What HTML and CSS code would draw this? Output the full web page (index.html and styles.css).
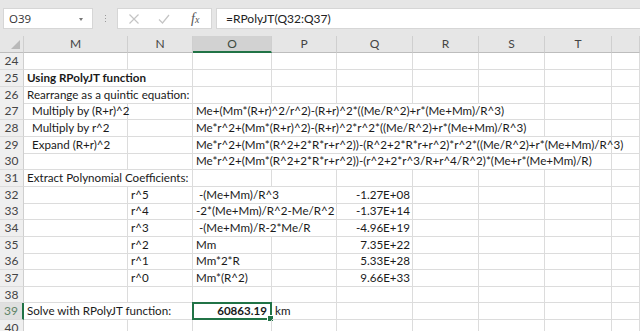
FILE: index.html
```html
<!DOCTYPE html>
<html lang="en">
<head>
    <meta charset="UTF-8">
    <meta name="viewport" content="width=device-width, initial-scale=1.0">
    <title>RPolyJT</title>
    <link rel="stylesheet" href="styles.css">
</head>
<body>

    <!-- Formula bar -->
    <div class="formula-bar">
        <div class="name-box">
            <span>O39</span>
            <span class="caret"></span>
        </div>
        <div class="grip">
            <span></span><span></span><span></span>
        </div>
        <div class="fx-buttons">
            <svg class="btn-icon" width="12" height="12" viewBox="0 0 12 12">
                <path d="M1.5 1.5 L10.5 10.5 M10.5 1.5 L1.5 10.5" stroke="#c4c4c4" stroke-width="1.2" fill="none"/>
            </svg>
            <svg class="btn-icon" width="12" height="12" viewBox="0 0 12 12">
                <path d="M1 6.5 L4.5 10 L11 2" stroke="#c4c4c4" stroke-width="1.2" fill="none"/>
            </svg>
            <span class="fx">f<i>x</i></span>
        </div>
        <div class="formula-input">=RPolyJT(Q32:Q37)</div>
    </div>

    <!-- Sheet -->
    <div class="sheet">
        <div class="row head">
            <div class="corner"><span class="corner-tri"></span></div>
            <div class="ch">M</div>
            <div class="ch">N</div>
            <div class="ch active">O</div>
            <div class="ch">P</div>
            <div class="ch">Q</div>
            <div class="ch">R</div>
            <div class="ch">S</div>
            <div class="ch">T</div>
            <div class="ch"></div>
        </div>

        <div class="row r17">
            <div class="rh">24</div>
            <div class="c"></div><div class="c"></div><div class="c"></div><div class="c"></div>
            <div class="c"></div><div class="c"></div><div class="c"></div><div class="c"></div><div class="c"></div>
        </div>

        <div class="row r17">
            <div class="rh">25</div>
            <div class="c span2 bold">Using RPolyJT function</div>
            <div class="c"></div><div class="c"></div><div class="c"></div>
            <div class="c"></div><div class="c"></div><div class="c"></div><div class="c"></div>
        </div>

        <div class="row r16">
            <div class="rh">26</div>
            <div class="c span2">Rearrange as a quintic equation:</div>
            <div class="c"></div><div class="c"></div><div class="c"></div>
            <div class="c"></div><div class="c"></div><div class="c"></div><div class="c"></div>
        </div>

        <div class="row r17">
            <div class="rh">27</div>
            <div class="c indent">Multiply by (R+r)^2</div>
            <div class="c"></div>
            <div class="c span5">Me+(Mm*(R+r)^2/r^2)-(R+r)^2*((Me/R^2)+r*(Me+Mm)/R^3)</div>
            <div class="c"></div><div class="c"></div>
        </div>

        <div class="row r17">
            <div class="rh">28</div>
            <div class="c indent">Multiply by r^2</div>
            <div class="c"></div>
            <div class="c span5">Me*r^2+(Mm*(R+r)^2)-(R+r)^2*r^2*((Me/R^2)+r*(Me+Mm)/R^3)</div>
            <div class="c"></div><div class="c"></div>
        </div>

        <div class="row r16">
            <div class="rh">29</div>
            <div class="c indent">Expand (R+r)^2</div>
            <div class="c"></div>
            <div class="c span6">Me*r^2+(Mm*(R^2+2*R*r+r^2))-(R^2+2*R*r+r^2)*r^2*((Me/R^2)+r*(Me+Mm)/R^3)</div>
            <div class="c"></div>
        </div>

        <div class="row r17">
            <div class="rh">30</div>
            <div class="c"></div>
            <div class="c"></div>
            <div class="c span6">Me*r^2+(Mm*(R^2+2*R*r+r^2))-(r^2+2*r^3/R+r^4/R^2)*(Me+r*(Me+Mm)/R)</div>
            <div class="c"></div>
        </div>

        <div class="row r17">
            <div class="rh">31</div>
            <div class="c span2">Extract Polynomial Coefficients:</div>
            <div class="c"></div><div class="c"></div><div class="c"></div>
            <div class="c"></div><div class="c"></div><div class="c"></div><div class="c"></div>
        </div>

        <div class="row r16">
            <div class="rh">32</div>
            <div class="c"></div>
            <div class="c">r^5</div>
            <div class="c span2"> -(Me+Mm)/R^3</div>
            <div class="c num">-1.27E+08</div>
            <div class="c"></div><div class="c"></div><div class="c"></div><div class="c"></div>
        </div>

        <div class="row r17">
            <div class="rh">33</div>
            <div class="c"></div>
            <div class="c">r^4</div>
            <div class="c span2">-2*(Me+Mm)/R^2-Me/R^2</div>
            <div class="c num">-1.37E+14</div>
            <div class="c"></div><div class="c"></div><div class="c"></div><div class="c"></div>
        </div>

        <div class="row r17">
            <div class="rh">34</div>
            <div class="c"></div>
            <div class="c">r^3</div>
            <div class="c span2"> -(Me+Mm)/R-2*Me/R</div>
            <div class="c num">-4.96E+19</div>
            <div class="c"></div><div class="c"></div><div class="c"></div><div class="c"></div>
        </div>

        <div class="row r16">
            <div class="rh">35</div>
            <div class="c"></div>
            <div class="c">r^2</div>
            <div class="c">Mm</div>
            <div class="c"></div>
            <div class="c num">7.35E+22</div>
            <div class="c"></div><div class="c"></div><div class="c"></div><div class="c"></div>
        </div>

        <div class="row r17">
            <div class="rh">36</div>
            <div class="c"></div>
            <div class="c">r^1</div>
            <div class="c">Mm*2*R</div>
            <div class="c"></div>
            <div class="c num">5.33E+28</div>
            <div class="c"></div><div class="c"></div><div class="c"></div><div class="c"></div>
        </div>

        <div class="row r17">
            <div class="rh">37</div>
            <div class="c"></div>
            <div class="c">r^0</div>
            <div class="c">Mm*(R^2)</div>
            <div class="c"></div>
            <div class="c num">9.66E+33</div>
            <div class="c"></div><div class="c"></div><div class="c"></div><div class="c"></div>
        </div>

        <div class="row r16">
            <div class="rh">38</div>
            <div class="c"></div><div class="c"></div><div class="c"></div><div class="c"></div>
            <div class="c"></div><div class="c"></div><div class="c"></div><div class="c"></div><div class="c"></div>
        </div>

        <div class="row r17">
            <div class="rh current">39</div>
            <div class="c span2">Solve with RPolyJT function:</div>
            <div class="c selected num bold">60863.19<span class="handle"></span></div>
            <div class="c">km</div>
            <div class="c"></div><div class="c"></div><div class="c"></div><div class="c"></div><div class="c"></div>
        </div>

        <div class="row r17">
            <div class="rh">40</div>
            <div class="c"></div><div class="c"></div><div class="c"></div><div class="c"></div>
            <div class="c"></div><div class="c"></div><div class="c"></div><div class="c"></div><div class="c"></div>
        </div>
    </div>

</body>
</html>
```

FILE: styles.css
```css
/* General */
body {
    margin: 0;
    width: 640px;
    height: 331px;
    overflow: hidden;
    background-color: #e6e6e6;
    font-family: 'Lato', 'Liberation Sans', sans-serif;
    color: #1a1a1a;
}

/* Formula bar */
.formula-bar {
    display: flex;
    align-items: stretch;
    height: 21px;
    padding: 8px 0 7px 0;
    background-color: #e6e6e6;
}

.name-box {
    width: 90px;
    margin-left: 3px;
    display: flex;
    align-items: center;
    justify-content: space-between;
    padding: 0 9px 0 5px;
    box-sizing: border-box;
    background-color: #fff;
    border: 1px solid #d6d6d6;
    font-family: 'Open Sans', sans-serif;
    font-size: 11.5px;
    color: #333;
}

.caret {
    width: 0;
    height: 0;
    border-left: 2px solid transparent;
    border-right: 2px solid transparent;
    border-top: 3px solid #777;
    margin-top: 1px;
}

.grip {
    width: 24px;
    display: flex;
    flex-direction: column;
    align-items: center;
    justify-content: center;
    gap: 2px;
}

.grip span {
    width: 1px;
    height: 1px;
    background-color: #9a9a9a;
}

.fx-buttons {
    width: 95px;
    display: flex;
    align-items: center;
    background-color: #fff;
    border: 1px solid #d6d6d6;
    box-sizing: border-box;
    padding-left: 10px;
}

.btn-icon {
    margin-right: 18px;
}

.fx {
    margin-left: 3px;
    font-family: 'Liberation Serif', serif;
    font-style: italic;
    font-size: 14px;
    color: #555;
}

.fx i {
    font-size: 10px;
}

.formula-input {
    flex: 1;
    margin-left: 4px;
    background-color: #fff;
    border: 1px solid #d6d6d6;
    border-right: none;
    padding-left: 9px;
    display: flex;
    align-items: center;
    font-size: 12px;
    color: #222;
}

/* Sheet grid */
.sheet {
    background-color: #fff;
}

.row {
    display: grid;
    grid-template-columns: 24px 104px 65px 79px 65px 76px 66px 66px 67px 1fr;
}

.r17 {
    height: 17px;
}

.r16 {
    height: 16px;
}

.row.head {
    height: 17px;
    background-color: #e6e6e6;
}

.corner {
    position: relative;
    border-right: 1px solid #cfcfcf;
    border-bottom: 1px solid #bdbdbd;
}

.corner-tri {
    position: absolute;
    right: 3px;
    bottom: 3px;
    width: 0;
    height: 0;
    border-left: 9px solid transparent;
    border-bottom: 9px solid #b9b9b9;
}

.ch {
    border-right: 1px solid #cfcfcf;
    border-bottom: 1px solid #bdbdbd;
    text-align: center;
    font-size: 12px;
    line-height: 16px;
    color: #444;
}

.ch.active {
    background-color: #d2d2d2;
    border-bottom: 2px solid #217346;
    line-height: 15px;
    color: #3d4a40;
}

.rh {
    background-color: #efefef;
    border-right: 1px solid #cfcfcf;
    border-bottom: 1px solid #dcdcdc;
    text-align: center;
    font-size: 12px;
    line-height: 16px;
    color: #444;
    overflow: hidden;
}

.rh.current {
    background-color: #e0e0e0;
    border-right: 2px solid #217346;
    color: #5f8468;
}

.c {
    border-right: 1px solid #dcdcdc;
    border-bottom: 1px solid #dcdcdc;
    padding: 0 2px 0 3px;
    font-size: 11.6px;
    line-height: 16px;
    white-space: pre;
    overflow: visible;
    position: relative;
}

.span2 {
    grid-column: span 2;
}

.span5 {
    grid-column: span 5;
}

.span6 {
    grid-column: span 6;
}

.indent {
    padding-left: 8px;
}

.bold {
    font-weight: bold;
}

.num {
    text-align: right;
}

.selected {
    border: 2px solid #217346;
    margin: -1px 0 0 -1px;
    padding-right: 3px;
    line-height: 14px;
}

.handle {
    position: absolute;
    right: -4px;
    bottom: -4px;
    width: 5px;
    height: 5px;
    background-color: #217346;
    border: 1px solid #fff;
}
```
